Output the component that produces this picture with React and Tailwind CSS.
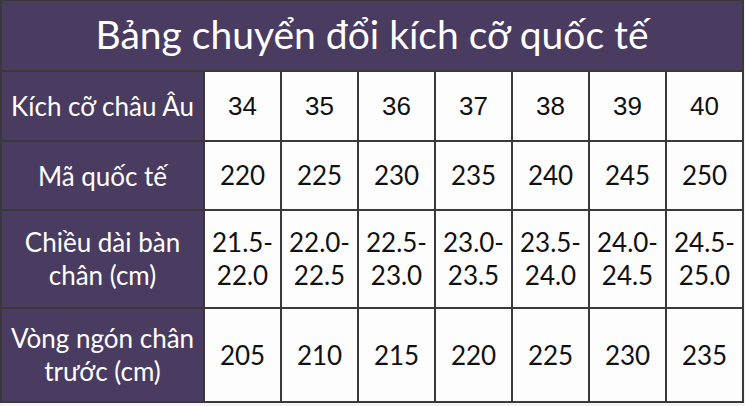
import React from "react";

const lato = { fontFamily: "Lato, 'Noto Sans', sans-serif" };

const rows = [
  { label: "Kích cỡ châu Âu", h: "h-[68px]", arial: true, vals: ["34", "35", "36", "37", "38", "39", "40"] },
  { label: "Mã quốc tế", h: "h-[67px]", vals: ["220", "225", "230", "235", "240", "245", "250"] },
  {
    label: ["Chiều dài bàn", "chân (cm)"],
    h: "h-[96px]",
    vals: [
      ["21.5-", "22.0"],
      ["22.0-", "22.5"],
      ["22.5-", "23.0"],
      ["23.0-", "23.5"],
      ["23.5-", "24.0"],
      ["24.0-", "24.5"],
      ["24.5-", "25.0"],
    ],
  },
  { label: ["Vòng ngón chân", "trước (cm)"], h: "h-[92px]", vals: ["205", "210", "215", "220", "225", "230", "235"] },
];

function Lines({ v }) {
  if (Array.isArray(v)) {
    return (
      <div className="flex flex-col items-center leading-[33px]">
        {v.map((t, i) => (
          <span key={i}>{t}</span>
        ))}
      </div>
    );
  }
  return <span>{v}</span>;
}

export default function App() {
  return (
    <div className="w-[745px] h-[406px] bg-[#f4f4f4]">
      <div className="w-[744px] bg-[#3a3838] grid grid-cols-[201px_repeat(7,75px)] gap-[2px] pl-[2px] pr-[2px] pt-[1px] pb-[2px]">
        <div
          className="col-span-8 h-[69px] bg-[#4a3b61] text-white text-[39px] flex items-center justify-center pb-[2px]"
          style={lato}
        >
          Bảng chuyển đổi kích cỡ quốc tế
        </div>
        {rows.map((r, ri) => (
          <React.Fragment key={ri}>
            <div
              className={`${r.h} bg-[#4a3b61] text-white text-[26px] leading-[32px] flex items-center justify-center text-center`}
              style={lato}
            >
              <Lines v={r.label} />
            </div>
            {r.vals.map((v, vi) => (
              <div
                key={vi}
                className={`${r.h} bg-[#fdfdfd] text-[#111] text-[26px] flex items-center justify-center`}
                style={r.arial ? { fontFamily: "'Liberation Sans', Arial, sans-serif" } : lato}
              >
                <Lines v={v} />
              </div>
            ))}
          </React.Fragment>
        ))}
      </div>
    </div>
  );
}
